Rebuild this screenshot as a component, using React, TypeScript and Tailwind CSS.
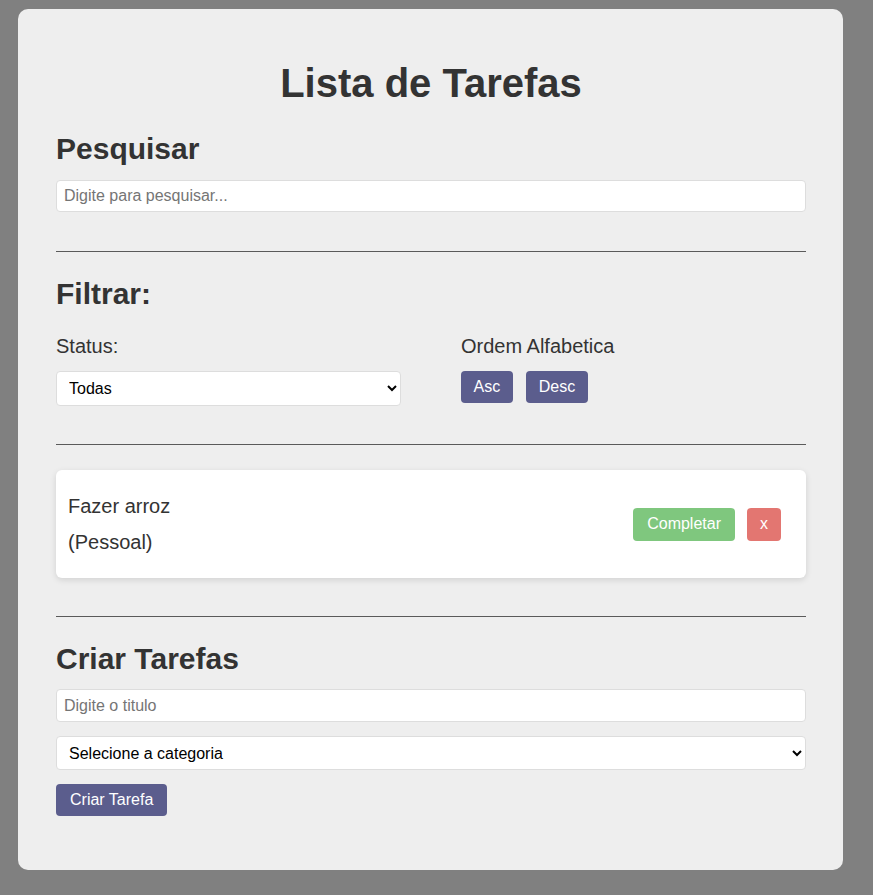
const tarefas = [{ titulo: "Fazer arroz", categoria: "Pessoal" }];

function Divider({ className = "" }: { className?: string }) {
  return <hr className={`border-0 border-t border-[#5a5a5a] ${className}`} />;
}

function Heading({ children, className = "" }: { children: React.ReactNode; className?: string }) {
  return (
    <h2 className={`text-[30px] font-bold leading-[34px] text-[#333] ${className}`}>{children}</h2>
  );
}

const btn =
  "h-[32px] rounded-[4px] text-[16px] leading-[18px] text-white bg-[#5b5d8d]";

export default function App() {
  return (
    <div
      className="min-h-screen bg-[#808080] pt-[9px] pb-[25px] pl-[18px]"
      style={{ fontFamily: '"Liberation Sans", Arial, sans-serif' }}
    >
      <div className="w-[825px] rounded-[10px] bg-[#eeeeee] pl-[38px] pr-[37px] pt-[51px] pb-[54px]">
        <h1 className="text-center text-[40px] font-bold leading-[46px] text-[#333]">
          Lista de Tarefas
        </h1>

        <Heading className="mt-[26px]">Pesquisar</Heading>
        <input
          type="text"
          placeholder="Digite para pesquisar..."
          className="mt-[14px] block h-[32px] w-full rounded-[4px] border border-[#dddddd] bg-white px-[7px] text-[16px] text-black outline-none placeholder:text-[#757575]"
        />

        <Divider className="mt-[39px]" />

        <Heading className="mt-[25px]">Filtrar:</Heading>
        <div className="mt-[24px] grid grid-cols-2 gap-[60px]">
          <div>
            <div className="text-[20px] leading-[23px] text-[#333]">Status:</div>
            <select className="mt-[13px] block h-[35px] w-full rounded-[4px] border border-[#dddddd] bg-white pl-[8px] pr-[6px] text-[16px] text-black outline-none">
              <option>Todas</option>
              <option>Completas</option>
              <option>Pendentes</option>
            </select>
          </div>
          <div>
            <div className="text-[20px] leading-[23px] text-[#333]">Ordem Alfabetica</div>
            <div className="mt-[13px] flex gap-[13px]">
              <button className={`${btn} px-[12.5px]`}>Asc</button>
              <button className={`${btn} px-[13px]`}>Desc</button>
            </div>
          </div>
        </div>

        <Divider className="mt-[38px]" />

        <div className="mt-[25px] flex flex-col gap-[12px]">
          {tarefas.map((t) => (
            <div
              key={t.titulo}
              className="flex items-center justify-between rounded-[6px] bg-white py-[18px] pl-[12px] pr-[25px] shadow-[0_2px_6px_rgba(0,0,0,0.12)]"
            >
              <div className="text-[20px] leading-[36px] text-[#333]">
                <div>{t.titulo}</div>
                <div>({t.categoria})</div>
              </div>
              <div className="flex gap-[12px]">
                <button className="h-[33px] rounded-[4px] bg-[#7fc77e] px-[14px] text-[16px] text-white">
                  Completar
                </button>
                <button className="h-[33px] rounded-[4px] bg-[#e37671] px-[13px] text-[16px] text-white">
                  x
                </button>
              </div>
            </div>
          ))}
        </div>

        <Divider className="mt-[38px]" />

        <Heading className="mt-[25px]">Criar Tarefas</Heading>
        <input
          type="text"
          placeholder="Digite o titulo"
          className="mt-[13px] block h-[33px] w-full rounded-[4px] border border-[#dddddd] bg-white px-[7px] text-[16px] text-black outline-none placeholder:text-[#757575]"
        />
        <select className="mt-[14px] block h-[34px] w-full rounded-[4px] border border-[#dddddd] bg-white pl-[8px] pr-[6px] text-[16px] text-black outline-none">
          <option>Selecione a categoria</option>
          <option>Pessoal</option>
          <option>Trabalho</option>
        </select>
        <button className={`${btn} mt-[14px] px-[14px]`}>Criar Tarefa</button>
      </div>
    </div>
  );
}
